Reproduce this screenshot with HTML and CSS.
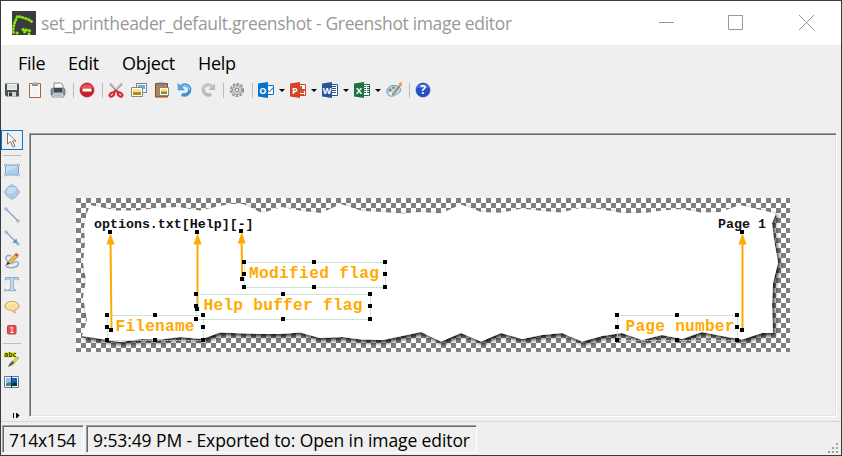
FILE: index.html
```html
<!DOCTYPE html>
<html lang="en">
<head>
<meta charset="utf-8">
<title>Greenshot image editor</title>
<link rel="stylesheet" href="styles.css">
</head>
<body>
<div class="window">
  <header class="titlebar">
    <svg class="logo" viewBox="0 0 24 24"><rect width="24" height="24" fill="#3b3c3d"/><path d="M19.500 10.500 16.500 8.500 12.500 7 8.500 6 5.500 5 4 8.500 2.500 12 1.500 16 1 20 2 23M5 22 8 23M11 18.500 14.500 19 19 20M17 23H17.100M12.500 21H12.600" fill="none" stroke="#86e60b" stroke-width="2.900" stroke-linecap="round" stroke-dasharray=".3 2.900"/></svg>
    <span class="title">set_printheader_default.greenshot - Greenshot image editor</span>
    <svg class="controls" viewBox="0 0 156 16"><path d="M0 7.500H15M69.500.5h14v14h-14zM140 0l15 15M155 0l-15 15" fill="none" stroke="#999"/></svg>
  </header>
  <nav class="menubar"><span class="m-file">File</span><span class="m-edit">Edit</span><span class="m-object">Object</span><span class="m-help">Help</span></nav>
  <div class="toolbar">
    <svg class="icon" viewBox="0 0 16 16"><path d="M1 1.500h14v13H2.500L1 13z" fill="#4b5254"/><path d="M3 2h10v6H3z" fill="#edf2f2"/><path d="M3 4h10M3 6h10" stroke="#c8d0d2"/><path d="M4 10h8v4.500H4z" fill="#cfd5d5"/><path d="M5 10.500h3V14H5z" fill="#35393a"/></svg>
    <svg class="icon" viewBox="0 0 16 16"><path d="M2.500 1.500h11v14h-11z" fill="#fafafa" stroke="#a9623c"/><path d="M4 3h8v11H4z" fill="#f4f5f5"/><path d="M5 1h6v3H5z" fill="#8c9294"/><path d="M6.500 0h3v2h-3z" fill="#bbb"/></svg>
    <svg class="icon" viewBox="0 0 16 16"><path d="M4 1h7l2 2v6H4z" fill="#fafafa" stroke="#888"/><path d="M1 7l2-1h10l2 1v6H1z" fill="#8d9498" stroke="#596065" stroke-width=".6"/><path d="M4 6h8v4H4z" fill="#3f4950"/><path d="M3 11h10l1 4H2z" fill="#e9edef" stroke="#777" stroke-width=".7"/><path d="M4 13h8" stroke="#7894a7"/></svg>
    <i class="sep"></i>
    <svg class="icon" viewBox="0 0 16 16"><circle cx="8" cy="8" r="7" fill="#c92026" stroke="#9f1219" stroke-width=".6"/><path d="M2 6a6.200 5 0 0 1 12 0z" fill="#e3545a"/><path d="M3.500 6.500h9v3h-9z" fill="#fff"/></svg>
    <i class="sep"></i>
    <svg class="icon" viewBox="0 0 16 16"><path d="M2 1.500 11 11M14 1.500 5 11" stroke="#8c9397" stroke-width="2.200"/><path d="M2.500 1.500 10 9M13.500 1.500 7 9" stroke="#eef2f3" stroke-width=".8"/><g fill="none" stroke="#d92a30" stroke-width="2.200"><ellipse cx="3.800" cy="12.500" rx="2.500" ry="1.700" transform="rotate(-38 4 12.500)"/><ellipse cx="12.200" cy="12.500" rx="2.500" ry="1.700" transform="rotate(38 12 12.500)"/><path d="M5.500 11 8 8.500l2.500 2.500"/></g></svg>
    <svg class="icon" viewBox="0 0 16 16"><path d="M5.500 1.500h10v9h-10z" fill="#eef6fd" stroke="#75838e"/><path d="M7 3h7v4H7z" fill="#72a9df"/><path d="M.5 5.500h11v9H.5z" fill="#fff" stroke="#858b8b"/><path d="M2 7h8v6H2z" fill="#ffe37b"/><path d="M2 10h8v3H2z" fill="#b18d18"/></svg>
    <svg class="icon" viewBox="0 0 16 16"><path d="M1.500 1.500h12v13.500h-12z" fill="#b88452" stroke="#844820"/><path d="M4 .5h6v3H4z" fill="#777d80"/><path d="M5.500 5.500h9v8h-9z" fill="#f7fafb" stroke="#81878b"/><path d="M7 7h6v5H7z" fill="#ffe16b"/><path d="M7 9.500h6V12H7z" fill="#a1811e"/></svg>
    <svg class="icon" viewBox="0 0 16 16"><path d="M4 4.500C8 1 13 4 12.700 8c-.3 4-4 6-8 4.500" fill="none" stroke="#3f91d6" stroke-width="3.300"/><path d="M4 4.500C8 2 12.500 4 12.500 8" fill="none" stroke="#91caf4" stroke-width="1.300"/><path d="M1 1.500V8h6.500z" fill="#55a6e5" stroke="#2c80c7" stroke-width=".5"/></svg>
    <svg class="icon" viewBox="0 0 16 16"><path d="M12 4.500C8 1 3 4 3.300 8c.3 4 4 6 8 4.500" fill="none" stroke="#b9b9b9" stroke-width="3.300"/><path d="M12 4.500C8 2 3.500 4 3.500 8" fill="none" stroke="#d3d3d3" stroke-width="1.300"/><path d="M15 1.500V8H8.500z" fill="#b9b9b9"/></svg>
    <i class="sep"></i>
    <svg class="icon" viewBox="0 0 16 16"><circle cx="8" cy="8" r="6.200" fill="none" stroke="#929292" stroke-width="1.800" stroke-dasharray="2.700 1.300"/><circle cx="8" cy="8" r="4.700" fill="#dedede" stroke="#929292"/><path d="M8 3v10M3 8h10M4.500 4.500l7 7M11.500 4.500l-7 7" stroke="#aaa" stroke-width=".8"/><circle cx="8" cy="8" r="1.800" fill="#eee" stroke="#888"/></svg>
    <i class="sep"></i>
    <span class="office"><svg class="icon" viewBox="0 0 16 16"><path d="M8 3.500h7.500v9H8z" fill="#fff" stroke="#0879cb"/><path d="m8 6 3.500 4L16 4.500" fill="none" stroke="#0879cb"/><path d="M0 1.500 10 0v16L0 14.500z" fill="#0872c4"/><text x="4.900" y="11.500">O</text></svg></span>
    <span class="office"><svg class="icon" viewBox="0 0 16 16"><path d="M8 2.500h7.500v11H8z" fill="#fff" stroke="#d24625"/><path d="M10 10.500h4M10 12.500h4" stroke="#d24625"/><path d="M12 4v3h3a3 3 0 1 1-3-3z" fill="#d24625"/><path d="M0 1.500 10 0v16L0 14.500z" fill="#d24625"/><text x="4.900" y="11.500">P</text></svg></span>
    <span class="office"><svg class="icon" viewBox="0 0 16 16"><path d="M8 2.500h7.500v11H8z" fill="#fff" stroke="#2a5699"/><path d="M10 4.500h4M10 6.500h4M10 8.500h4M10 10.500h4" stroke="#2a5699"/><path d="M0 1.500 10 0v16L0 14.500z" fill="#2a5699"/><text x="5" y="11.500">W</text></svg></span>
    <span class="office"><svg class="icon" viewBox="0 0 16 16"><path d="M8 2.500h7.500v11H8z" fill="#fff" stroke="#207245"/><path d="M10 4.500h5M10 6.500h5M10 8.500h5M10 10.500h5" stroke="#207245"/><path d="M12.500 3v10" stroke="#fff"/><path d="M0 1.500 10 0v16L0 14.500z" fill="#207245"/><text x="4.900" y="11.500">X</text></svg></span>
    <svg class="icon" viewBox="0 0 16 16"><path d="M.8 10C.5 5.500 5 3 9 3.500c5 .5 7 4 4.500 7-1.500 2-3 1-4.500 2.500-2.500 2.500-8 1-8.200-3z" fill="#b5daee" stroke="#5ba4cc"/><circle cx="4" cy="8" r="1.500" fill="#ec4f43"/><circle cx="7.500" cy="5.700" r="1.300" fill="#45a945"/><circle cx="5" cy="12" r="1.400" fill="#f9f9f9"/><path d="M15 2 9 10l-3 3" fill="none" stroke="#b57635" stroke-width="1.500"/><path d="M12.500 1 16 0v4l-2.500 1z" fill="#e8a45b"/></svg>
    <i class="sep"></i>
    <svg class="icon" viewBox="0 0 16 16"><circle cx="8" cy="8" r="7" fill="#244fc6" stroke="#173ba0" stroke-width=".6"/><path d="M2 6a6.200 5 0 0 1 12 0z" fill="#4d74db"/><text x="8" y="12" class="question">?</text></svg>
  </div>
  <main class="work">
    <aside class="tools">
      <div class="selected"><svg class="icon" viewBox="0 0 16 16"><path d="M3.500 1v11l3-2.500 2.500 5.500 2-1-2.500-5H12z" fill="#fff" stroke="#777"/></svg></div>
      <i class="rule"></i>
      <svg class="icon" viewBox="0 0 16 16"><path d="M1.500 3h13v10h-13z" fill="#c7dcf0" stroke="#7fa4cc"/><path d="M2 12C4 7 9 9 14 4v8z" fill="#aecbe6"/><g fill="#fff" stroke="#7fa4cc" stroke-width=".8"><circle cx="1.500" cy="3" r="1.100"/><circle cx="14.500" cy="3" r="1.100"/><circle cx="1.500" cy="13" r="1.100"/><circle cx="14.500" cy="13" r="1.100"/></g></svg>
      <svg class="icon" viewBox="0 0 16 16"><circle cx="8" cy="8" r="6.300" fill="#c7dcf0" stroke="#7fa4cc"/><path d="M2.500 10C7 10 10 9 13 5c2 5-2 9-5 9s-5-2-5.500-4z" fill="#aecbe6"/><g fill="#fff" stroke="#7fa4cc" stroke-width=".8"><circle cx="8" cy="1.700" r="1.100"/><circle cx="1.400" cy="8" r="1.100"/><circle cx="14.600" cy="8" r="1.100"/><circle cx="8" cy="14.300" r="1.100"/></g></svg>
      <svg class="icon" viewBox="0 0 16 16"><path d="m2 2 12 12" stroke="#7fa4cc" stroke-width="1.200"/><g fill="#fff" stroke="#7fa4cc"><circle cx="2" cy="2" r="1.200"/><circle cx="14" cy="14" r="1.200"/></g></svg>
      <svg class="icon" viewBox="0 0 16 16"><path d="m2 2 12 12" stroke="#7fa4cc" stroke-width="1.200"/><path d="m8.500 12.500 4-4 1 5z" fill="#5d91c5"/><g fill="#fff" stroke="#7fa4cc"><circle cx="2" cy="2" r="1.200"/><circle cx="14" cy="14" r="1.200"/></g></svg>
      <svg class="icon" viewBox="0 0 16 16"><path d="M7 3C3 1 0 5 3.500 8 6 10 1 11 2 13c2 3 10 2 12-1 2-3-3-5-6-1" fill="none" stroke="#8caed4" stroke-width="1.500"/><path d="m3 11.500 1-3 7-7 3 2-7.500 7z" fill="#f1bf3d" stroke="#7c6538" stroke-width=".7"/><path d="m10.500 1.500 1.500-1.500 2.800 2-1.500 1.700z" fill="#dd3f43"/><path d="m3 11.800.7-2.800L6 10.500z" fill="#222"/></svg>
      <svg class="icon" viewBox="0 0 16 16"><path d="M1.500 4V1.500h13V4h-1L12.500 3H9.300v10l2.200.7v1h-7v-1l2.200-.7V3H3.500l-1 1z" fill="#d5e5f5" stroke="#86abd1"/><path d="M0 14.500h5" stroke="#86abd1"/><circle cx="1" cy="14" r="1" fill="#fff" stroke="#86abd1"/></svg>
      <svg class="icon" viewBox="0 0 16 16"><path d="M8 2.500c4 0 7 1.800 7 4.400 0 2.800-2.500 4.100-5 4.300l1.500 2.800-4.500-2.700C3.500 11 1 9.700 1 7s3-4.500 7-4.500z" fill="#f9df98" stroke="#c7a45c"/><path d="M3 6c2-3 8-3 10 0" fill="none" stroke="#fff5cf"/></svg>
      <svg class="icon" viewBox="0 0 16 16"><rect x="3.500" y="3.500" width="8.500" height="8.500" rx="1" fill="#e45155" stroke="#c83d44"/><path d="M6.500 6 8 5V10.500M6.500 10.500h3" fill="none" stroke="#fff"/></svg>
      <i class="rule"></i>
      <svg class="icon" viewBox="0 0 16 16"><path d="M0 1h12v5.500H0z" fill="#f2ef24"/><text x="0" y="6" class="abc">abc</text><path d="m4.500 15.500 2.500-4 6-5.500 2 1-6 6.500z" fill="#dce32f" stroke="#a3a52a" stroke-width=".8"/><path d="m4 15.500 2-3.500 2.500-2 2 1.500-3 3z" fill="#666"/></svg>
      <svg class="icon" viewBox="0 0 16 16"><path d="M.5 2.500h14v11H.5z" fill="#eff8ff" stroke="#647e88"/><path d="M2 4h5.500v8H2z" fill="#91c1ec"/><path d="M8 4h5v8H8z" fill="#1762b7"/><path d="M2 10c2-2 4-2 5.500-1v3H2z" fill="#50877a"/><path d="M8 10c2-2 3.500-2 5-1v3H8z" fill="#07333d"/><path d="M7.500 2v12" stroke="#16364b"/></svg>
      <svg class="more" viewBox="0 0 7 5"><path d="M.5 0v5M3.500 0v5" stroke="#000"/><path d="m4 0 2.500 2.500L4 5z"/></svg>
    </aside>
    <section class="viewport">
      <svg class="canvas" viewBox="76 198 714 154">
        <defs>
          <filter id="shade" x="-5%" y="-10%" width="110%" height="125%"><feDropShadow dx="2" dy="2.500" stdDeviation="2.300" flood-color="#000" flood-opacity=".9"/></filter>
          <g id="h"><path d="M-2-2h4v4h-4z"/></g>
          <path id="tip" d="M0 1-4 12.500h8z" fill="#fa0"/>
        </defs>
        <path filter="url(#shade)" fill="#fff" d="M90 205 117 210.500 137 210.500 158 208 178 207 200 210.500 220 206 230 204 243 204 262 213 282 207 302 211 321 213 341 204 362 211 382 212 402 213.500 421 212 441 213.600 461 204.600 481 212 501 212.700 522 208.600 542 211 561 212.600 580 208 600 209 622 213 645 213 662 210.600 682 209 701 212.600 720 212 740 205 776 213.600 772 223 774 240 778 262.600 773 283 772 305 773 333 762 333 742 339.600 722 336 702 332 682 339 662 335 642 340 622 333 602 336 582 341.600 562 333 542 335 522 339 501 333 481 341.600 461 333 441 341.600 421 332 402 336 383 340 362 339.600 342 337 320 338 300 332.600 280 334 260 334 220 332.600 202 339 180 337 160 339.600 142 339 120 342 102 339 82 336 87 320 83 297 86 280 83 263 85 243 84 227 87 213z"/>
        <g class="caption"><text x="94" y="228">options.txt[Help][-]</text><text x="718" y="228">Page 1</text></g>
        <g class="label"><text x="249" y="277.500" textLength="130">Modified flag</text><text x="203.500" y="309.500" textLength="159">Help buffer flag</text><text x="115.500" y="330.500" textLength="79">Filename</text><text x="625.500" y="330.500" textLength="109">Page number</text></g>
        <g fill="none" stroke="#fa0" stroke-width="2"><path d="m110.500 238 1 92M197.500 238v70M241.500 238l.7 40M742.500 238v92"/></g>
        <use href="#tip" x="110.500" y="232"/><use href="#tip" x="197.500" y="232"/><use href="#tip" x="241.700" y="231"/><use href="#tip" x="742.500" y="232"/>
        <g class="frame"><path d="M244.500 262.500h141v25h-141zM196.500 294.500h174v25h-174zM107.500 315.500h96v25h-96zM617.500 315.500h120v25h-120z"/></g>
        <g>
          <use href="#h" x="110" y="232"/><use href="#h" x="111" y="330"/><use href="#h" x="197" y="232"/><use href="#h" x="197" y="309"/><use href="#h" x="241" y="231"/><use href="#h" x="242" y="279"/><use href="#h" x="742" y="232"/><use href="#h" x="742" y="330"/>
          <use href="#h" x="244" y="262"/><use href="#h" x="314" y="262"/><use href="#h" x="385" y="262"/><use href="#h" x="244" y="274"/><use href="#h" x="385" y="274"/><use href="#h" x="244" y="287"/><use href="#h" x="314" y="287"/><use href="#h" x="385" y="287"/>
          <use href="#h" x="196" y="294"/><use href="#h" x="283" y="294"/><use href="#h" x="370" y="294"/><use href="#h" x="196" y="306"/><use href="#h" x="370" y="306"/><use href="#h" x="196" y="319"/><use href="#h" x="283" y="319"/><use href="#h" x="370" y="319"/>
          <use href="#h" x="107" y="315"/><use href="#h" x="155" y="315"/><use href="#h" x="203" y="315"/><use href="#h" x="107" y="327"/><use href="#h" x="203" y="327"/><use href="#h" x="107" y="340"/><use href="#h" x="155" y="340"/><use href="#h" x="203" y="340"/>
          <use href="#h" x="617" y="315"/><use href="#h" x="677" y="315"/><use href="#h" x="737" y="315"/><use href="#h" x="617" y="327"/><use href="#h" x="737" y="327"/><use href="#h" x="617" y="340"/><use href="#h" x="677" y="340"/><use href="#h" x="737" y="340"/>
        </g>
      </svg>
    </section>
  </main>
  <footer class="status">
    <span class="cell size">714x154</span><span class="cell message">9:53:49 PM - Exported to: Open in image editor</span>
    <svg class="grip" viewBox="0 0 11 11"><path d="M8 0h2v2H8zM4 4h2v2H4zM8 4h2v2H8zM0 8h2v2H0zM4 8h2v2H4zM8 8h2v2H8z" fill="#a0a0a0"/></svg>
  </footer>
</div>
</body>
</html>
```
FILE: styles.css
```css
* { box-sizing: border-box; }
body { margin: 0; font-family: "Open Sans", "Noto Sans", sans-serif; color: #000; }
svg { display: block; flex: none; }
.window { width: 842px; height: 456px; border: 1px solid #3b3a3b; background: #efefef; display: flex; flex-direction: column; overflow: hidden; }
.titlebar { height: 44px; flex: none; background: #fff; display: flex; align-items: center; padding-left: 11px; }
.logo { width: 24px; height: 24px; margin-right: 5px; margin-top: -1px; }
.title { color: #999; font-size: 17.500px; letter-spacing: -0.34px; white-space: nowrap; }
.controls { width: 156px; height: 16px; margin-left: auto; margin-right: 26px; }
.menubar { height: 36px; flex: none; display: flex; align-items: center; font-size: 18px; line-height: 36px; white-space: nowrap; padding-left: 17px; letter-spacing: -0.3px; }
.m-file { width: 50px; }
.m-edit { width: 54px; }
.m-object { width: 76px; }
.toolbar { height: 18px; flex: none; display: flex; align-items: center; gap: 7px; padding-left: 3px; }
.icon { width: 16px; height: 16px; }
.sep { width: 1px; height: 15px; background: #bdbdbd; margin-right: -2px; }
.office { width: 25px; display: flex; align-items: center; gap: 5px; }
.office::after { content: ""; flex: none; border: 3px solid transparent; border-top-color: #000; border-bottom: 0; margin-top: 1px; }
.office text { font: bold 9px "Open Sans", sans-serif; fill: #fff; text-anchor: middle; }
.question { font: bold 12px "Open Sans", sans-serif; fill: #fff; text-anchor: middle; }
.abc { font: bold 7px "Open Sans", sans-serif; fill: #333; }
.work { flex: 1; min-height: 0; display: flex; padding-top: 34px; padding-bottom: 4px; }
.tools { width: 28px; flex: none; margin-top: -3px; margin-bottom: -4px; display: flex; flex-direction: column; align-items: flex-start; gap: 7px; }
.tools > .icon { margin-left: 3px; }
.selected { width: 22px; height: 20px; border: 1px solid #0078d7; display: flex; align-items: center; justify-content: center; }
.rule { width: 18px; height: 1px; background: #bdbdbd; margin: -2px 0 -2px 2px; }
.rule + .icon { margin-top: 1px; margin-bottom: -1px; }
.rule:nth-of-type(2) + .icon { margin-top: 2px; margin-bottom: 0; }
.more { width: 7px; height: 5px; margin: 16px 0 0 12px; }
.viewport { width: 808px; border: 1px solid; border-color: #a0a0a0 #fff #fff #a0a0a0; box-shadow: inset 1px 1px #696969, inset -1px -1px #e3e3e3; display: flex; padding: 64px 0 0 46px; }
.canvas { width: 714px; height: 154px; background: conic-gradient(#fff 25%, #7f7f7f 0 50%, #fff 0 75%, #7f7f7f 0) 0 0 / 10px 10px; }
.caption { font: bold 13.300px "Liberation Mono", monospace; fill: #111; }
.label { font: bold 16.200px "Liberation Mono", monospace; fill: #fa0; }
.frame { fill: none; stroke: #b3d6c2; stroke-dasharray: 2 1; }
.status { height: 34px; flex: none; border-top: 1px solid #d5d5d5; display: flex; align-items: flex-start; padding: 3px 2px 0 1px; gap: 2px; }
.cell { height: 28px; border: 1px solid; border-color: #a0a0a0 #fff #fff #a0a0a0; box-shadow: inset 1px 1px #696969; padding-left: 6px; line-height: 28px; font-size: 17.500px; letter-spacing: -0.1px; white-space: nowrap; }
.size { width: 82px; letter-spacing: -0.35px; }
.message { width: 391px; }
.grip { width: 11px; height: 11px; margin: 18px 0 0 auto; }
```
